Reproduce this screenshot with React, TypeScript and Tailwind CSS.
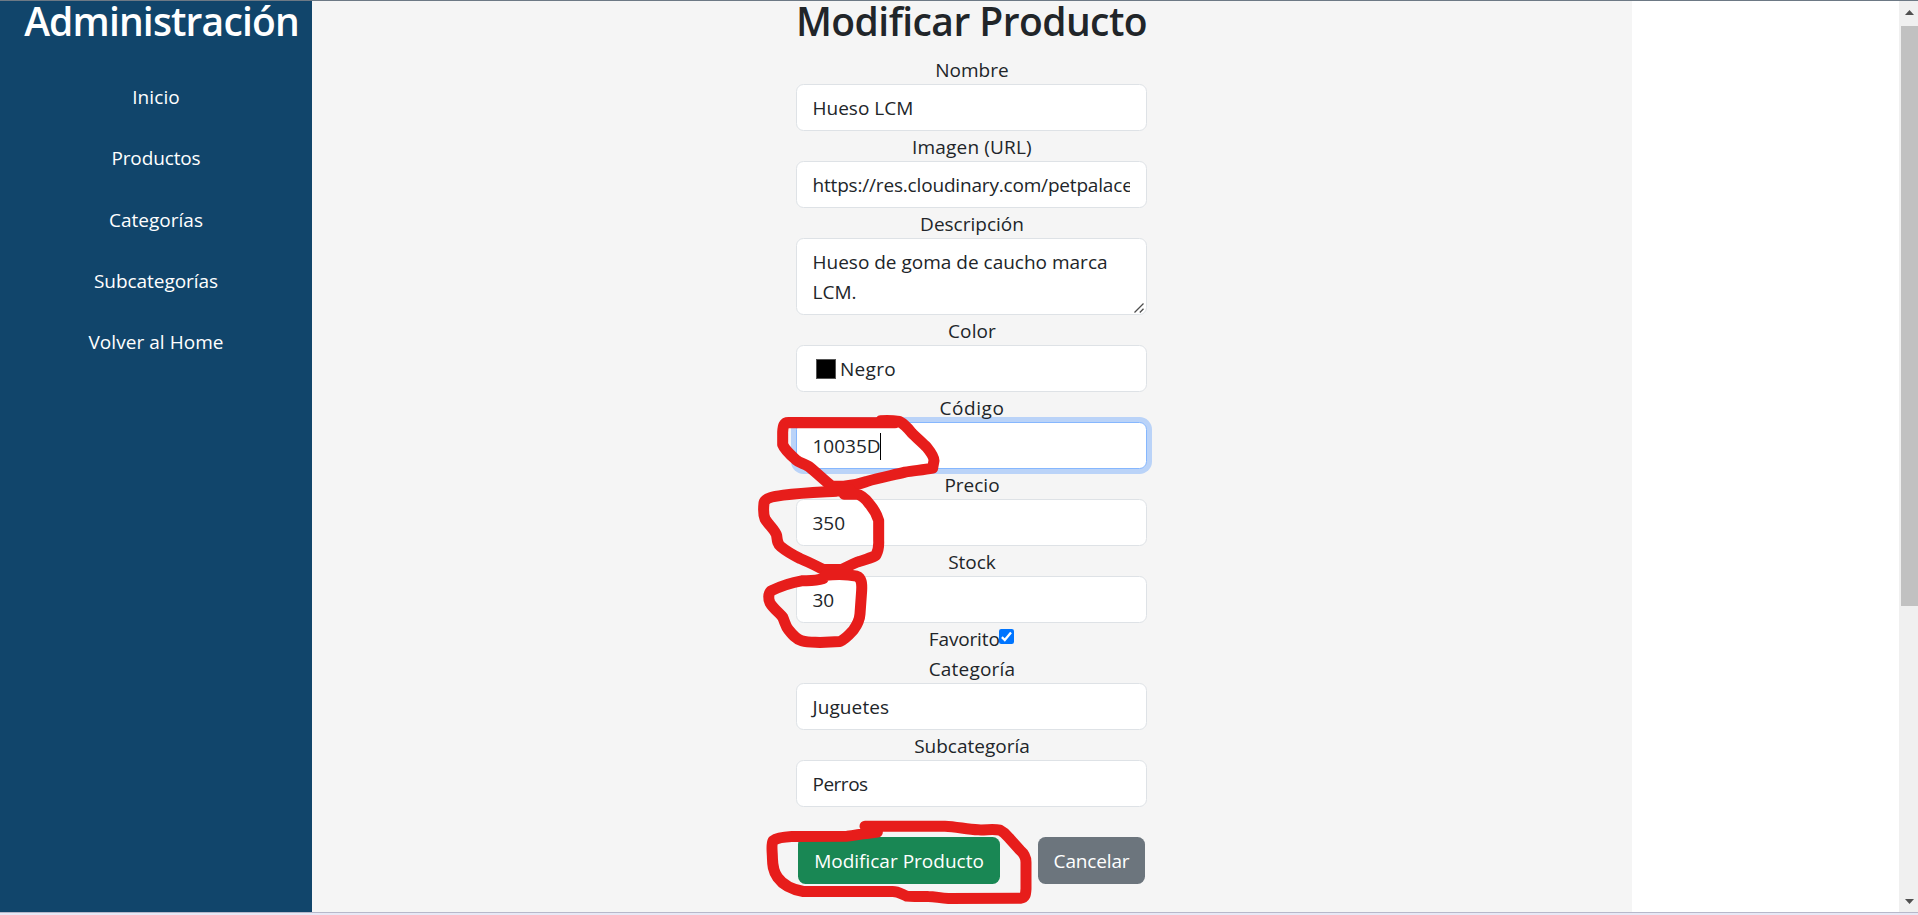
import type { ReactNode } from "react";

const navItems = [
  { label: "Inicio", tracking: "tracking-[0.1px]" },
  { label: "Productos", tracking: "tracking-[-0.13px]" },
  { label: "Categorías", tracking: "tracking-normal" },
  { label: "Subcategorías", tracking: "tracking-[-0.05px]" },
  { label: "Volver al Home", tracking: "tracking-[0.05px]" },
];

function Label({ children, className = "" }: { children: ReactNode; className?: string }) {
  return <label className={`z-10 block h-[30px] pl-px text-center leading-[32px] ${className}`}>{children}</label>;
}

function Control({ children, className = "", focused = false }: { children: ReactNode; className?: string; focused?: boolean }) {
  return (
    <div
      className={`flex h-[47px] items-center rounded-[7.5px] border bg-white pt-px pr-4 pl-[15.5px] leading-[30px] ${
        focused ? "border-[#86b7fe] ring-5 ring-[#bad3f8]" : "border-[#dee2e6]"
      } ${className}`}
    >
      {children}
    </div>
  );
}

function Sidebar() {
  return (
    <aside className="flex w-[312px] shrink-0 flex-col items-center bg-[#11456b] text-white">
      <h1 className="ml-[11px] h-[81px] text-[39px] leading-[39px] font-semibold tracking-[-0.84px]">Administración</h1>
      <nav className="flex flex-col items-center gap-[31.3px]">
        {navItems.map((item) => (
          <a key={item.label} className={`h-[30px] leading-[30px] ${item.tracking}`}>
            {item.label}
          </a>
        ))}
      </nav>
    </aside>
  );
}

function ProductForm() {
  return (
    <form className="isolate flex w-[351px] flex-col">
      <h2 className="h-[53px] text-center text-[39px] leading-[39px] font-semibold tracking-[-0.56px] whitespace-nowrap">
        Modificar Producto
      </h2>
      <Label>Nombre</Label>
      <Control>Hueso LCM</Control>
      <Label className="tracking-[0.17px]">Imagen (URL)</Label>
      <Control>
        <span className="w-[318.5px] overflow-hidden tracking-[-0.18px] whitespace-nowrap">
          https://res.cloudinary.com/petpalace
        </span>
      </Control>
      <Label>Descripción</Label>
      <div className="relative h-[77px] rounded-[7.5px] border border-[#dee2e6] bg-white pt-2 pr-4 pl-[15.5px] leading-[30px]">
        Hueso de goma de caucho marca
        <br />
        LCM.
        <svg className="absolute right-[2px] bottom-[1px] h-[10px] w-[10px]" viewBox="0 0 10 10" stroke="#4d4d4d" strokeWidth="1.3">
          <path d="M0.5 9.5 9.5 0.5M5.8 9.5 9.5 5.8" />
        </svg>
      </div>
      <Label className="tracking-[0.1px]">Color</Label>
      <Control>
        <span className="mr-1 ml-[3.5px] h-5 w-5 border border-[#555] bg-black" />
        <span className="tracking-[0.3px]">Negro</span>
      </Control>
      <Label className="tracking-[0.6px]">Código</Label>
      <Control focused>
        <span>10035D</span>
        <span className="-ml-px h-[27px] w-px bg-black" />
      </Control>
      <Label>Precio</Label>
      <Control>350</Control>
      <Label>Stock</Label>
      <Control>30</Control>
      <div className="flex h-[30px] justify-center leading-[32px]">
        <span className="tracking-[-0.15px]">Favorito</span>
        <svg className="-ml-[0.5px] mt-[6px] h-[15px] w-[15px]" viewBox="0 0 15 15">
          <rect width="15" height="15" rx="2.2" fill="#0075ff" />
          <path d="M2.9 8.1 5.8 11 12 3.5" fill="none" stroke="#fff" strokeWidth="2.3" />
        </svg>
      </div>
      <Label className="tracking-[0.2px]">Categoría</Label>
      <Control className="tracking-[0.1px]">Juguetes</Control>
      <Label>Subcategoría</Label>
      <Control className="tracking-[-0.5px]">Perros</Control>
      <div className="mt-[30px] flex justify-between px-[2px] text-white">
        <button type="button" className="h-[47px] w-[202px] rounded-[7.5px] bg-[#198754] pt-px">
          Modificar Producto
        </button>
        <button type="button" className="h-[47px] w-[107px] rounded-[7.5px] bg-[#6c757d] pt-px tracking-[-0.15px]">
          Cancelar
        </button>
      </div>
    </form>
  );
}

function Scrollbar() {
  return (
    <div className="flex w-[19px] shrink-0 flex-col items-end bg-[#f0f0f0]">
      <div className="h-[25px] w-[17px]">
        <svg className="mt-[9px] ml-1 h-[5px] w-[9px]" viewBox="0 0 9 5" fill="#505050">
          <path d="M0 5 4.5 0 9 5Z" />
        </svg>
      </div>
      <div className="h-[580px] w-[17px] bg-[#c1c1c1]" />
      <div className="flex w-[17px] flex-1 items-end">
        <svg className="mb-2 ml-1 h-[5px] w-[9px]" viewBox="0 0 9 5" fill="#505050">
          <path d="M0 0 4.5 5 9 0Z" />
        </svg>
      </div>
    </div>
  );
}

function MarkerStrokes() {
  return (
    <svg
      className="pointer-events-none absolute inset-x-0 top-0 z-20 h-[914px] w-[1918px]"
      viewBox="0 0.5 1918 914"
      fill="none"
      stroke="#e71d1b"
      strokeWidth="33"
      strokeLinecap="round"
      strokeLinejoin="round"
    >
      <g transform="translate(740 400) scale(0.33333)">
        <path d="M422 61 C445 59 465 61 478 63 C492 70 503 82 515 97 C530 112 548 128 560 140 C572 155 582 168 582 180 L578 203 C548 209 520 210 495 215 C455 225 420 231 380 243 C350 254 335 256 310 257 L275 257 C250 237 228 215 205 197 C190 188 178 187 168 178 C150 162 134 148 128 132 L128 95 C129 75 132 66 145 66 L465 67" />
        <path d="M330 267 L290 272 C240 275 185 277 130 284 C100 288 76 292 72 307 C70 325 69 340 75 355 C87 375 105 388 110 405 C112 420 112 430 122 438 C140 453 160 464 180 474 C205 484 230 497 250 507 L305 507 C325 498 340 488 358 483 C375 476 398 472 408 464 C415 450 417 437 416 420 L416 360 C410 340 401 325 388 310 C376 294 363 283 350 281 L312 281" />
        <path d="M250 534 C225 542 205 540 185 541 C155 546 120 558 93 571 C84 580 85 597 90 607 C100 625 120 638 128 650 C135 665 137 678 145 687 C157 702 168 716 185 721 C205 727 225 725 240 726 L300 723 C315 717 330 700 340 689 C352 672 359 658 360 640 L365 570 C366 550 365 532 350 527 C325 521 285 521 255 524" />
      </g>
      <g transform="translate(740 780) scale(0.33333)">
        <path d="M375 137 L615 137 C650 138 680 147 715 148 C740 149 760 145 780 149 C792 155 799 162 807 172 L840 209 C853 220 858 229 858 245 L858 325 C857 343 855 352 842 353 L625 354 C600 353 585 348 565 348 C540 347 520 350 500 347 C485 341 475 333 458 333 L190 333 C155 327 128 312 113 291 C96 268 98 245 97 225 C96 205 94 190 99 181 C112 171 135 169 155 168 L320 167 C345 166 360 160 380 159 L412 155" />
      </g>
    </svg>
  );
}

export default function App() {
  return (
    <div className="relative flex h-[915px] w-full flex-col border-t border-[#6d7985] bg-white font-['Open_Sans','Noto_Sans',sans-serif] text-[19px] text-[#212529]">
      <div className="flex min-h-0 flex-1">
        <Sidebar />
        <main className="flex w-[1320px] shrink-0 justify-center bg-[#f5f5f5] pr-px">
          <ProductForm />
        </main>
        <div className="flex-1" />
        <Scrollbar />
      </div>
      <div className="h-[3px] shrink-0 border-t border-[#b7b8ca] bg-[#e8e8f5]" />
      <MarkerStrokes />
    </div>
  );
}
